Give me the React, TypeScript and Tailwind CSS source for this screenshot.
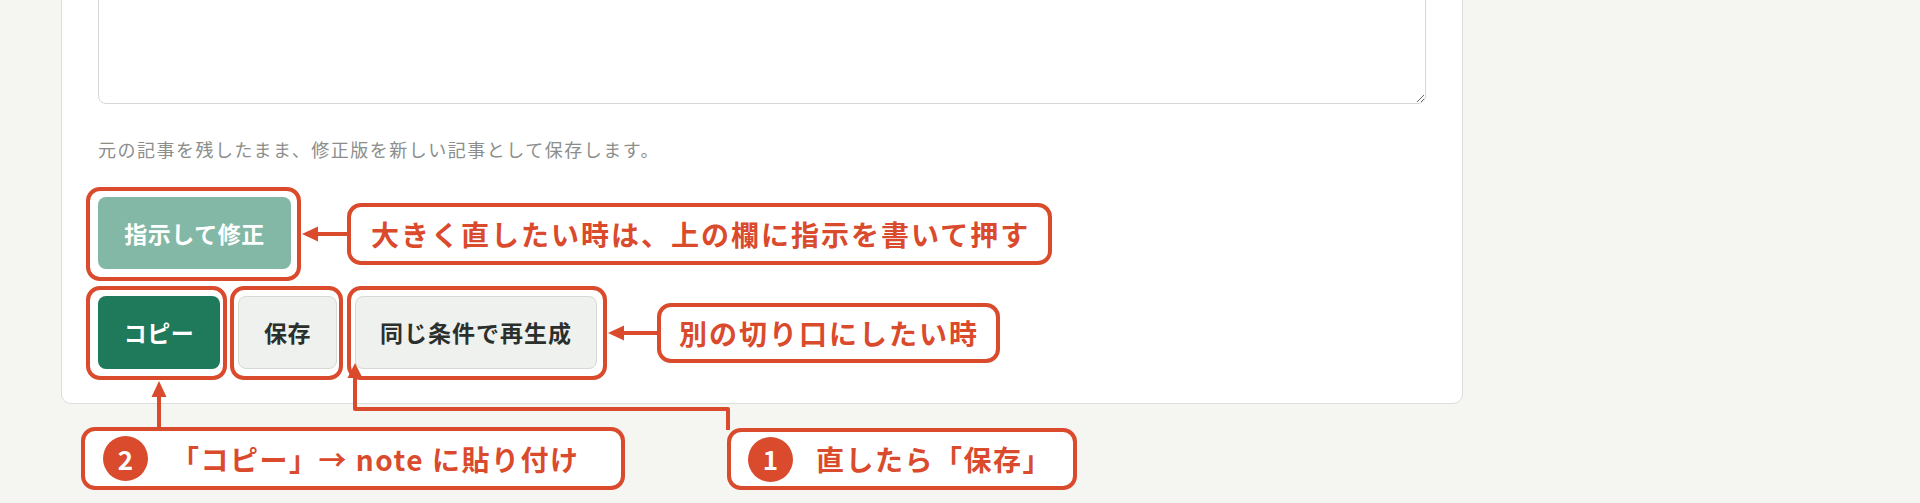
import React from "react";

const RED = "#da4a2c";

function Callout({
  left,
  top,
  width,
  height,
  children,
  className = "",
}: {
  left: number;
  top: number;
  width: number;
  height: number;
  children?: React.ReactNode;
  className?: string;
}) {
  return (
    <div
      className={`absolute rounded-[14px] border-[4px] border-[#da4a2c] ${className}`}
      style={{ left, top, width, height }}
    >
      {children}
    </div>
  );
}

function Badge({ n }: { n: string }) {
  return (
    <span className="flex h-[45px] w-[45px] shrink-0 items-center justify-center rounded-full bg-[#da4a2c] text-[26px] font-bold leading-none text-white">
      {n}
    </span>
  );
}

export default function App() {
  return (
    <div className="relative h-[503px] w-full overflow-hidden bg-[#f5f6f2] font-['Noto_Sans_CJK_JP','Noto_Sans',sans-serif]">
      {/* editor card */}
      <div className="-mt-[200px] ml-[61px] w-[1402px] rounded-[10px] border border-[#dcdedb] bg-white px-[36px] pb-[34px] pt-[36px]">
        <textarea
          className="block h-[267px] w-full resize rounded-[8px] border border-[#d6d8d4] bg-white p-3 outline-none"
          defaultValue=""
        />
        <p className="mt-[32px] text-[18px] leading-[27px] tracking-[1.5px] text-[#8b8e8a]">
          元の記事を残したまま、修正版を新しい記事として保存します。
        </p>
        <div className="mt-[34px] flex">
          <button className="flex h-[72px] w-[193px] items-center justify-center rounded-[8px] bg-[#84b8a6] text-[23px] font-bold tracking-[0.5px] text-white">
            指示して修正
          </button>
        </div>
        <div className="mt-[27px] flex gap-[18px]">
          <button className="flex h-[73px] w-[122px] items-center justify-center rounded-[8px] bg-[#1f7a5c] text-[23px] font-bold tracking-[0.5px] text-white">
            コピー
          </button>
          <button className="flex h-[73px] w-[99px] items-center justify-center rounded-[8px] border border-[#d6d9d4] bg-[#eff1ee] text-[23px] font-bold tracking-[0.5px] text-[#2b302c]">
            保存
          </button>
          <button className="flex h-[73px] w-[242px] items-center justify-center rounded-[8px] border border-[#d6d9d4] bg-[#eff1ee] text-[23px] font-bold tracking-[1px] text-[#2b302c]">
            同じ条件で再生成
          </button>
        </div>
      </div>

      {/* annotation layer */}
      <div className="pointer-events-none absolute inset-0">
        <svg
          className="absolute inset-0"
          width="1920"
          height="503"
          viewBox="0 0 1920 503"
        >
          <g stroke={RED} strokeWidth="4" fill="none" strokeLinejoin="round">
            <line x1="349" y1="234" x2="316" y2="234" />
            <line x1="659" y1="333" x2="622" y2="333" />
            <line x1="159" y1="429" x2="159" y2="395" />
            <path d="M728 430 V409 H355 V376" />
          </g>
          <g fill={RED}>
            <polygon points="302,234 318,226.5 318,241.5" />
            <polygon points="608,333 624,325.5 624,340.5" />
            <polygon points="159,381 151.5,397 166.5,397" />
            <polygon points="355,363 347.5,378 362.5,378" />
          </g>
        </svg>

        {/* highlight frames */}
        <Callout left={86} top={187} width={215} height={94} />
        <Callout left={86} top={286} width={141} height={94} />
        <Callout left={230} top={286} width={113} height={94} />
        <Callout left={347} top={286} width={260} height={94} />

        <Callout
          left={347}
          top={203}
          width={705}
          height={62}
          className="flex items-center bg-white pl-[20px]"
        >
          <span className="whitespace-nowrap text-[28px] font-bold leading-none tracking-[2px] text-[#da4a2c]">
            大きく直したい時は、上の欄に指示を書いて押す
          </span>
        </Callout>

        <Callout
          left={657}
          top={303}
          width={343}
          height={60}
          className="flex items-center bg-white pl-[18px]"
        >
          <span className="whitespace-nowrap text-[28px] font-bold leading-none tracking-[2px] text-[#da4a2c]">
            別の切り口にしたい時
          </span>
        </Callout>

        <Callout
          left={81}
          top={427}
          width={544}
          height={63}
          className="flex items-center bg-white pl-[18px]"
        >
          <Badge n="2" />
          <span className="ml-[23px] whitespace-nowrap text-[28px] font-bold leading-none tracking-[1.5px] text-[#da4a2c]">
            「コピー」→ note に貼り付け
          </span>
        </Callout>

        <Callout
          left={727}
          top={428}
          width={350}
          height={62}
          className="flex items-center bg-white pl-[17px]"
        >
          <Badge n="1" />
          <span className="ml-[23px] whitespace-nowrap text-[28px] font-bold leading-none tracking-[1.5px] text-[#da4a2c]">
            直したら「保存」
          </span>
        </Callout>
      </div>
    </div>
  );
}
